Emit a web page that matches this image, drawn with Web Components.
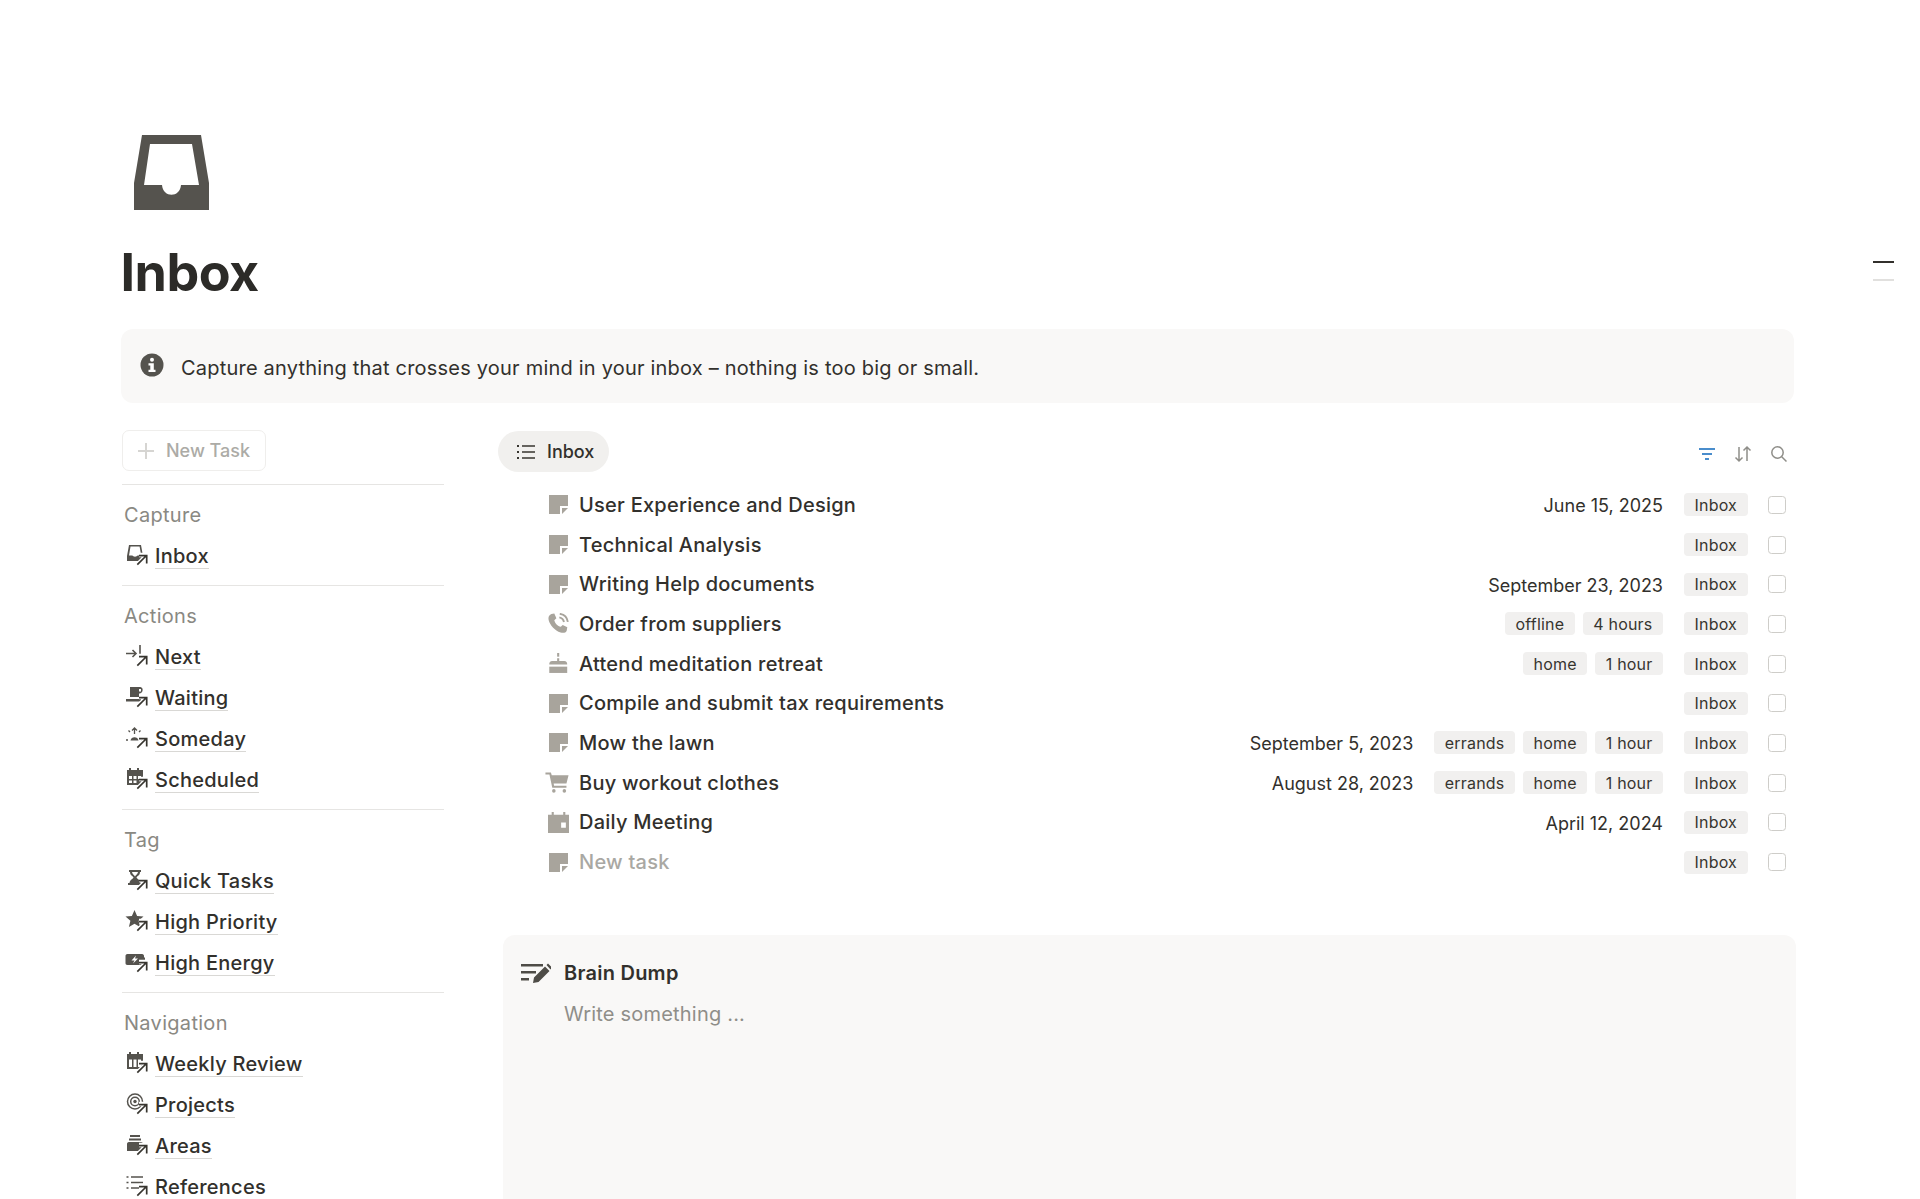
<!DOCTYPE html>
<html lang="en">
<head>
<meta charset="utf-8">
<title>Inbox</title>
<style>
    html, body { margin: 0; height: 1199px; overflow: hidden; background: #fff; }
    body { font-family: Inter, "Liberation Sans", sans-serif; color: #32302c; }
</style>
</head>
<body>
<inbox-page></inbox-page>

<script>
    ((w, d) => {
        // Icon glyphs, all drawn in their own small viewBox
        const ARROW = '<path d="M12.500 21.500 21 13M14 12H22V20" fill="none" stroke="#fff" stroke-width="4.500"/>' +
            '<path d="M12.300 21.700 21 13M14 12.700H21.700V20.400" fill="none" stroke="#37352f" stroke-width="1.700"/>';

        const SIDE_ICONS = {
            inbox: '<path fill-rule="evenodd" d="M4 1H16L18 12V17H2V12ZM5.500 2.600 4 11.500H7.500C8 13 12 13 12.500 11.500H16.200L14.600 2.600Z"/>',
            next: '<path d="M1 8.500H11M7.500 5 11 8.500 7.500 12M15 0V10" fill="none" stroke="currentColor" stroke-width="1.600"/>',
            waiting: '<path d="M5 1H14C17.500 1 18 3 17.500 5 17 7 15 7.500 14 7.500V11H5Z"/><rect x="1" y="13" width="15" height="2.500"/><rect x="14" y="3" width="2" height="2.500" fill="#fff"/>',
            someday: '<path d="M9.500 1V7M7 3.500 9.500 1 12 3.500M3.500 3.500 5 5M15.500 3.500 14 5M1 13H3M16 13H18" fill="none" stroke="currentColor" stroke-width="1.300"/><path d="M5.500 13.500C6 9 13 9 13.500 13.500Z"/>',
            scheduled: '<path fill-rule="evenodd" d="M4 0H6V2H12V0H14V2H18V17H2V2H4ZM4 8V11H7V8ZM8.500 8V11H11.500V8ZM13 8V11H16V8ZM4 12.500V15H7V12.500ZM8.500 12.500V15H11.500V12.500Z"/>',
            quick: '<path d="M4 1H16V3H15C15 6.500 12 7 11.500 8.500 12 10 15 10.500 15.500 14H17V16H3V14H4.500C5 10.500 8 10 8.500 8.500 8 7 5 6.500 5 3H4ZM7 3C7 5 9.500 6 10 7.500 10.500 6 13 5 13 3Z"/>',
            star: '<path d="M9.500 0 12.100 6 18.500 6.500 13.600 10.800 15.100 17 9.500 13.700 3.900 17 5.400 10.800.5 6.500 6.900 6Z"/>',
            energy: '<path fill-rule="evenodd" d="M2.500 3H17C18.500 3 19 4 19 5V6.500H20V10H19V12C19 13 18.500 14 17 14H2.500C1 14 .5 13 .5 12V5C.5 4 1 3 2.500 3ZM11 4.500 6.500 9.500H9.500L8 12.500 13 7.500H10Z"/>',
            weekly: '<path fill-rule="evenodd" d="M4 0H6V2H12V0H14V2H18V17H2V2H4ZM4 7.500V15H7V7.500ZM8.500 7.500V15H11.500V7.500ZM13 7.500V15H16V7.500Z"/>',
            projects: '<g fill="none" stroke="currentColor" stroke-width="1.500"><circle cx="10" cy="8.500" r="7.500"/><circle cx="10" cy="8.500" r="4.300"/></g><circle cx="10" cy="8.500" r="1.700"/>',
            areas: '<rect x="5" y="1" width="10" height="2"/><rect x="4" y="4.500" width="12" height="2"/><path d="M4 8H16C17.500 8 18 9 18 10V17H2V10C2 9 2.500 8 4 8Z"/>',
            references: '<g fill="none" stroke="currentColor" stroke-width="1.500"><path d="M6 2H18M6 7.500H18M6 13H14"/><path d="M1.500 2H3.500M1.500 7.500H3.500M1.500 13H3.500"/></g>',
        };

        const NOTE = '<path d="M0 0H19V11H11V19H0Z"/><path d="M13 13H19L13 19Z"/>';
        const TASK_ICONS = {
            note: NOTE,
            phone: '<path d="M3.200.9 6 .4 8 5 6 6.800C6.600 9.500 9.200 12.500 12.200 13.200L14 11.400 18.400 13.600 17.800 16.800C17 18.800 14.500 19.300 12 18.500 6.500 16.800 1.800 11.500.6 6.600 0 4 1 1.900 3.200.9Z"/><path d="M10.800 4.200C13 4.600 14.700 6.300 15.200 8.600M11.200 .8C15.200 1.400 18.300 4.500 18.900 8.500" fill="none" stroke="currentColor" stroke-width="1.800"/>',
            cake: '<rect x="8.700" y="0" width="2" height="3.500"/><path d="M8.700 5H10.700V7.500H15.500C17.500 7.500 18.300 8.800 18.300 11H1.200C1.200 8.800 2 7.500 4 7.500H8.700Z"/><path d="M1.200 13H18.300V19H1.200Z"/>',
            cart: '<path d="M0 .4H5.200L6 3H22L20 11H7.800L8.200 13H20V15H6.500L3.800 2.400H0Z"/><circle cx="8" cy="18" r="1.700"/><circle cx="18" cy="18" r="1.700"/>',
            calendar: '<path fill-rule="evenodd" d="M3.500 0H5.500V2.500H14.500V0H16.500V2.500H20V20H0V2.500H3.500ZM12.500 10V15H17V10Z"/>',
        };

        function defineEl(name, styles, markup, onConnect) {
            const tpl = d.createElement('template');
            tpl.innerHTML = `<style>${styles}</style>${markup}`;
            customElements.define(name, class extends HTMLElement {
                constructor() {
                    super();
                    this.attachShadow({mode: 'open'});
                    this.shadowRoot.appendChild(d.importNode(tpl.content, true));
                }
                connectedCallback() {
                    if (onConnect) onConnect.call(this, this.shadowRoot);
                }
            });
        }

        // A link in the left column: glyph with the small link arrow over it
        defineEl('side-link', `
            :host { display: flex; align-items: center; height: 41px; padding-left: 3px; }
            svg { width: 24px; height: 24px; margin-right: 6px; color: #55534e; fill: currentColor; flex: none; position: relative; top: -1px; }
            span { font-size: 20px; font-weight: 500; line-height: 24px; letter-spacing: .25px; border-bottom: 1px solid #d9d8d5; }
        `, `<svg viewBox="0 0 24 24"></svg><span><slot></slot></span>`, function (root) {
            root.querySelector('svg').innerHTML = `<g transform="translate(0 1)">${SIDE_ICONS[this.getAttribute('icon')]}</g>${ARROW}`;
        });

        defineEl('side-group', `
            :host { display: block; border-top: 1px solid #e6e5e3; padding-top: 17px; padding-bottom: 8.500px; }
            h3 { margin: 0 0 7.500px 2px; font-size: 20px; line-height: 26px; font-weight: 400; letter-spacing: .3px; color: #8a8983; }
        `, `<h3></h3><slot></slot>`, function (root) {
            root.querySelector('h3').textContent = this.getAttribute('label');
        });

        defineEl('new-button', `
            :host { display: inline-flex; align-items: center; box-sizing: border-box; width: 144px; height: 41px;
                border: 1px solid #efeeec; border-radius: 7px; padding-left: 13px; color: #acaba6; font-size: 18px; font-weight: 500; }
            svg { width: 20px; height: 20px; margin-right: 10px; }
        `, `<svg viewBox="0 0 20 20"><path d="M10 2V18M2 10H18" stroke="#d6d5d2" stroke-width="2"/></svg><slot></slot>`);

        defineEl('side-nav', `
            :host { display: block; width: 322px; margin: -1px 0 0 1px; }
            .top { display: flex; height: 54px; }
        `, `<div class="top"><new-button>New Task</new-button></div><slot></slot>`);

        defineEl('note-callout', `
            :host { display: flex; align-items: center; height: 74px; background: #f9f8f7; border-radius: 12px; padding-left: 19px;
                font-size: 20px; letter-spacing: .21px; }
            svg { width: 24px; height: 24px; margin-right: 17px; position: relative; top: -1px; }
            span { padding-top: 4px; }
        `, `<svg viewBox="0 0 24 24"><circle cx="12" cy="12" r="11.500" fill="#55534e"/><circle cx="12" cy="6.800" r="2" fill="#fff"/><path d="M8.500 10.200H13.800V16.800H15.500V19H8.500V16.800H10.300V12.400H8.500Z" fill="#fff"/></svg><span><slot></slot></span>`);

        defineEl('tag-chip', `
            :host { display: inline-flex; align-items: center; height: 23px; padding: 0 10.500px; background: #f1f0ef; border-radius: 4px;
                font-size: 16px; letter-spacing: .2px; color: #37352f; white-space: nowrap; }
        `, `<slot></slot>`);

        defineEl('task-row', `
            :host { display: flex; align-items: center; height: 39.700px; font-size: 20px; }
            .ico { width: 26px; height: 22px; margin-right: 7.500px; margin-left: 47.500px; display: flex; justify-content: center; align-items: center; flex: none; }
            svg { width: 21px; height: 21px; fill: #a8a49c; color: #a8a49c; }
            .title { flex: 1; font-weight: 500; letter-spacing: .25px; white-space: nowrap; }
            :host([muted]) .title { color: #a9a8a3; }
            .date { font-size: 18px; margin-right: 21px; padding-top: 2px; white-space: nowrap; }
            .tags { display: flex; gap: 8px; margin-right: 21px; }
            .box { width: 18px; height: 18px; box-sizing: border-box; border: 1.500px solid #cecdc9; border-radius: 3.500px; margin: 0 8.500px 0 20px; }
        `, `<div class="ico"><svg viewBox="0 0 20 20"></svg></div><div class="title"><slot></slot></div><div class="meta" style="display:contents"></div><tag-chip>Inbox</tag-chip><div class="box"></div>`, function (root) {
            const icon = this.getAttribute('icon') || 'note';
            const svg = root.querySelector('svg');
            svg.innerHTML = TASK_ICONS[icon];
            if (icon === 'cart') { svg.setAttribute('viewBox', '0 0 22 20'); svg.style.width = '24px'; svg.style.marginLeft = '-4px'; }
            if (icon === 'note') { svg.setAttribute('viewBox', '0 0 19 19'); svg.style.width = svg.style.height = '19px'; }
            const meta = root.querySelector('.meta');
            const date = this.getAttribute('date');
            if (date) {
                const el = d.createElement('div');
                el.className = 'date';
                el.textContent = date;
                meta.appendChild(el);
            }
            const tags = this.getAttribute('tags');
            if (tags) {
                const el = d.createElement('div');
                el.className = 'tags';
                tags.split(',').forEach(t => {
                    const chip = d.createElement('tag-chip');
                    chip.textContent = t;
                    el.appendChild(chip);
                });
                meta.appendChild(el);
            }
        });

        defineEl('view-bar', `
            :host { display: flex; align-items: center; height: 41px; margin-bottom: 13px; }
            .tab { display: flex; align-items: center; height: 41px; box-sizing: border-box; width: 111px; padding-left: 18px; border-radius: 21px;
                background: #f1f0ee; font-size: 18px; font-weight: 500; }
            .tab svg { width: 20px; height: 20px; margin-right: 11px; }
            .tools { margin-left: auto; display: flex; gap: 18px; margin-right: 6px; position: relative; top: 2px; }
            .tools svg { width: 18px; height: 18px; fill: none; }
        `, `<div class="tab"><svg viewBox="0 0 20 20"><path d="M6 4H19M6 10H19M6 16H19" stroke="#37352f" stroke-width="1.500"/><path d="M1 4H3M1 10H3M1 16H3" stroke="#37352f" stroke-width="2"/></svg><slot></slot></div>
            <div class="tools">
                <svg viewBox="0 0 18 18"><path d="M1 4H17M4 9H14M7 14H11" stroke="#4a8dcc" stroke-width="2"/></svg>
                <svg viewBox="0 0 18 18"><path d="M5 2V16M1.500 12.500 5 16 8.500 12.500M13 16V2M9.500 5.500 13 2 16.500 5.500" stroke="#8f8e89" stroke-width="1.500"/></svg>
                <svg viewBox="0 0 18 18"><circle cx="7.500" cy="7.500" r="5.700" stroke="#8f8e89" stroke-width="1.500"/><path d="M11.700 11.700 16.500 16.500" stroke="#8f8e89" stroke-width="1.500"/></svg>
            </div>`);

        defineEl('brain-dump', `
            :host { display: block; margin: 53px 0 0 5px; width: 1293px; height: 420px; background: #f9f8f7; border-radius: 12px 12px 0 0; box-sizing: border-box; padding: 20px 0 0 18px; }
            .head { display: flex; align-items: center; height: 36px; font-size: 20px; font-weight: 600; letter-spacing: .25px; }
            svg { width: 30px; height: 24px; margin-right: 13px; fill: #4e4c47; }
            .body { margin: 7px 0 0 43px; font-size: 20px; letter-spacing: .2px; color: #8f8e89; line-height: 32px; }
        `, `<div class="head"><svg viewBox="0 0 30 24"><path d="M0 3H22V5.500H0ZM0 10H15V12.500H0ZM0 17H8V19.500H0Z"/><path d="M12 22 13 16.500 24 5.500 28.500 10 17.500 21ZM25.500 4 27 2.500 31 6.500 29.500 8.500Z"/></svg><slot name="title"></slot></div><div class="body"><slot></slot></div>`);

        defineEl('inbox-page', `
            :host { display: block; position: relative; width: 1920px; height: 1199px; overflow: hidden; }
            .wrap { padding: 135px 0 0 121px; width: 1673px; }
            .glyph { display: block; width: 75px; height: 75px; margin-left: 13px; fill: #55534e; }
            h1 { margin: 31px 0 24px -.5px; font-size: 52px; line-height: 64px; font-weight: 700; color: #2c2b28; letter-spacing: -.5px; }
            .cols { display: grid; grid-template-columns: 323px minmax(0, 1fr); column-gap: 54px; margin-top: 28px; }
            .toc { position: absolute; left: 1873px; top: 261px; width: 21px; }
            .toc i { display: block; height: 2px; background: #32302c; }
            .toc i + i { margin-top: 16px; background: #e1e0de; }
        `, `<div class="wrap">
                <svg class="glyph" viewBox="0 0 75 75"><path fill-rule="evenodd" d="M8 0H67L75 48V75H0V48ZM16 9 10 50H28C29 63 46 63 47 50H65L58 9Z"/></svg>
                <h1>Inbox</h1>
                <note-callout>Capture anything that crosses your mind in your inbox – nothing is too big or small.</note-callout>
                <div class="cols">
                    <side-nav>
                        <side-group label="Capture"><side-link icon="inbox">Inbox</side-link></side-group>
                        <side-group label="Actions">
                            <side-link icon="next">Next</side-link>
                            <side-link icon="waiting">Waiting</side-link>
                            <side-link icon="someday">Someday</side-link>
                            <side-link icon="scheduled">Scheduled</side-link>
                        </side-group>
                        <side-group label="Tag">
                            <side-link icon="quick">Quick Tasks</side-link>
                            <side-link icon="star">High Priority</side-link>
                            <side-link icon="energy">High Energy</side-link>
                        </side-group>
                        <side-group label="Navigation">
                            <side-link icon="weekly">Weekly Review</side-link>
                            <side-link icon="projects">Projects</side-link>
                            <side-link icon="areas">Areas</side-link>
                            <side-link icon="references">References</side-link>
                        </side-group>
                    </side-nav>
                    <div>
                        <view-bar>Inbox</view-bar>
                        <task-row date="June 15, 2025">User Experience and Design</task-row>
                        <task-row>Technical Analysis</task-row>
                        <task-row date="September 23, 2023">Writing Help documents</task-row>
                        <task-row icon="phone" tags="offline,4 hours">Order from suppliers</task-row>
                        <task-row icon="cake" tags="home,1 hour">Attend meditation retreat</task-row>
                        <task-row>Compile and submit tax requirements</task-row>
                        <task-row date="September 5, 2023" tags="errands,home,1 hour">Mow the lawn</task-row>
                        <task-row icon="cart" date="August 28, 2023" tags="errands,home,1 hour">Buy workout clothes</task-row>
                        <task-row icon="calendar" date="April 12, 2024">Daily Meeting</task-row>
                        <task-row muted>New task</task-row>
                        <brain-dump><span slot="title">Brain Dump</span>Write something ...</brain-dump>
                    </div>
                </div>
            </div>
            <div class="toc"><i></i><i></i></div>`);
    })(window, document);
</script>
</body>
</html>
